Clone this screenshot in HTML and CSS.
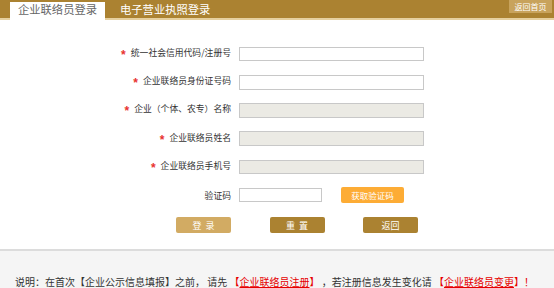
FILE: index.html
```html
<!DOCTYPE html>
<html lang="zh-CN">
<head>
<meta charset="utf-8">
<title>企业联络员登录</title>
<link rel="stylesheet" href="styles.css">
</head>
<body>
<div class="topbar">
  <div class="tab tab-active">企业联络员登录</div>
  <div class="tab">电子营业执照登录</div>
  <a class="home">返回首页</a>
</div>
<form class="form">
  <div class="row"><label class="lbl"><span class="star">*</span>统一社会信用代码/注册号</label><input class="inp" type="text"></div>
  <div class="row"><label class="lbl"><span class="star">*</span>企业联络员身份证号码</label><input class="inp" type="text"></div>
  <div class="row"><label class="lbl"><span class="star">*</span>企业（个体、农专）名称</label><input class="inp inp-ro" type="text" readonly></div>
  <div class="row"><label class="lbl"><span class="star">*</span>企业联络员姓名</label><input class="inp inp-ro" type="text" readonly></div>
  <div class="row"><label class="lbl"><span class="star">*</span>企业联络员手机号</label><input class="inp inp-ro" type="text" readonly></div>
  <div class="row"><label class="lbl">验证码</label><input class="inp inp-code" type="text"><button type="button" class="getcode">获取验证码</button></div>
  <div class="btnrow">
    <button type="button" class="btn btn-light">登&nbsp;&nbsp;录</button>
    <button type="button" class="btn">重&nbsp;&nbsp;置</button>
    <button type="button" class="btn">返回</button>
  </div>
</form>
<div class="footer">说明：在首次【企业公示信息填报】之前， 请先 <a class="red">【<span class="ul">企业联络员注册</span>】</a> ，若注册信息发生变化请 <a class="red">【<span class="ul">企业联络员变更</span>】</a><span class="red">！</span></div>
</body>
</html>
```
FILE: styles.css
```css
html, body {
  margin: 0;
  padding: 0;
  overflow: hidden;
  background: #fff;
  font-family: "Noto Sans CJK SC", "Liberation Sans", sans-serif;
}
.topbar {
  display: flex;
  align-items: flex-start;
  height: 18px;
  background: #ab8231;
  border-bottom: 2px solid #e6d09f;
  padding-left: 10px;
}
.tab {
  height: 18px;
  margin-top: 2px;
  line-height: 15px;
  font-size: 11.3px;
  color: #fff;
  padding: 0 15px;
  box-sizing: border-box;
}
.tab-active {
  width: 95px;
  padding: 0;
  text-align: center;
  background: #fff;
  color: #666;
}
.home {
  margin-left: auto;
  margin-right: 2px;
  width: 43px;
  height: 13px;
  line-height: 13px;
  font-size: 8px;
  text-align: center;
  color: #fff;
  background: #c8a35c;
}
.form {
  margin: 20px 0 0 0;
}
.row {
  display: flex;
  align-items: center;
  height: 28.2px;
}
.lbl {
  width: 239px;
  box-sizing: border-box;
  padding-right: 8px;
  text-align: right;
  font-size: 8.8px;
  color: #333;
}
.star {
  color: #e8322f;
  font-family: "Liberation Sans", sans-serif;
  font-weight: bold;
  font-size: 12px;
  vertical-align: -3px;
  margin-right: 5px;
}
.inp {
  width: 185px;
  height: 14.5px;
  box-sizing: border-box;
  margin: 0;
  padding: 0;
  border: 1px solid #c8c8c8;
  background: #fff;
}
.inp-ro {
  background: #ebeae4;
}
.inp-code {
  width: 83px;
  height: 13.5px;
}
.getcode {
  margin: 0 0 0 19px;
  width: 63px;
  height: 15.5px;
  padding: 0;
  border: none;
  border-radius: 2px;
  background: #fdac35;
  color: #fff;
  font-family: inherit;
  font-size: 8.5px;
}
.btnrow {
  display: flex;
  gap: 38.5px;
  padding-left: 176px;
  margin-top: 8px;
}
.btn {
  width: 55px;
  height: 16px;
  padding: 0;
  margin: 0;
  border: none;
  border-radius: 2px;
  background: #ab8231;
  color: #fff;
  font-family: inherit;
  font-size: 9px;
}
.btn-light {
  background: #d2ab63;
}
.footer {
  margin-top: 16px;
  height: 39px;
  box-sizing: border-box;
  border-top: 2px solid #dcdcdc;
  background: #f5f5f5;
  padding: 23.5px 0 0 15px;
  font-size: 10px;
  line-height: 14px;
  color: #333;
  white-space: nowrap;
}
.red {
  color: #e60000;
  text-decoration: none;
}
.ul {
  text-decoration: underline;
}
```
